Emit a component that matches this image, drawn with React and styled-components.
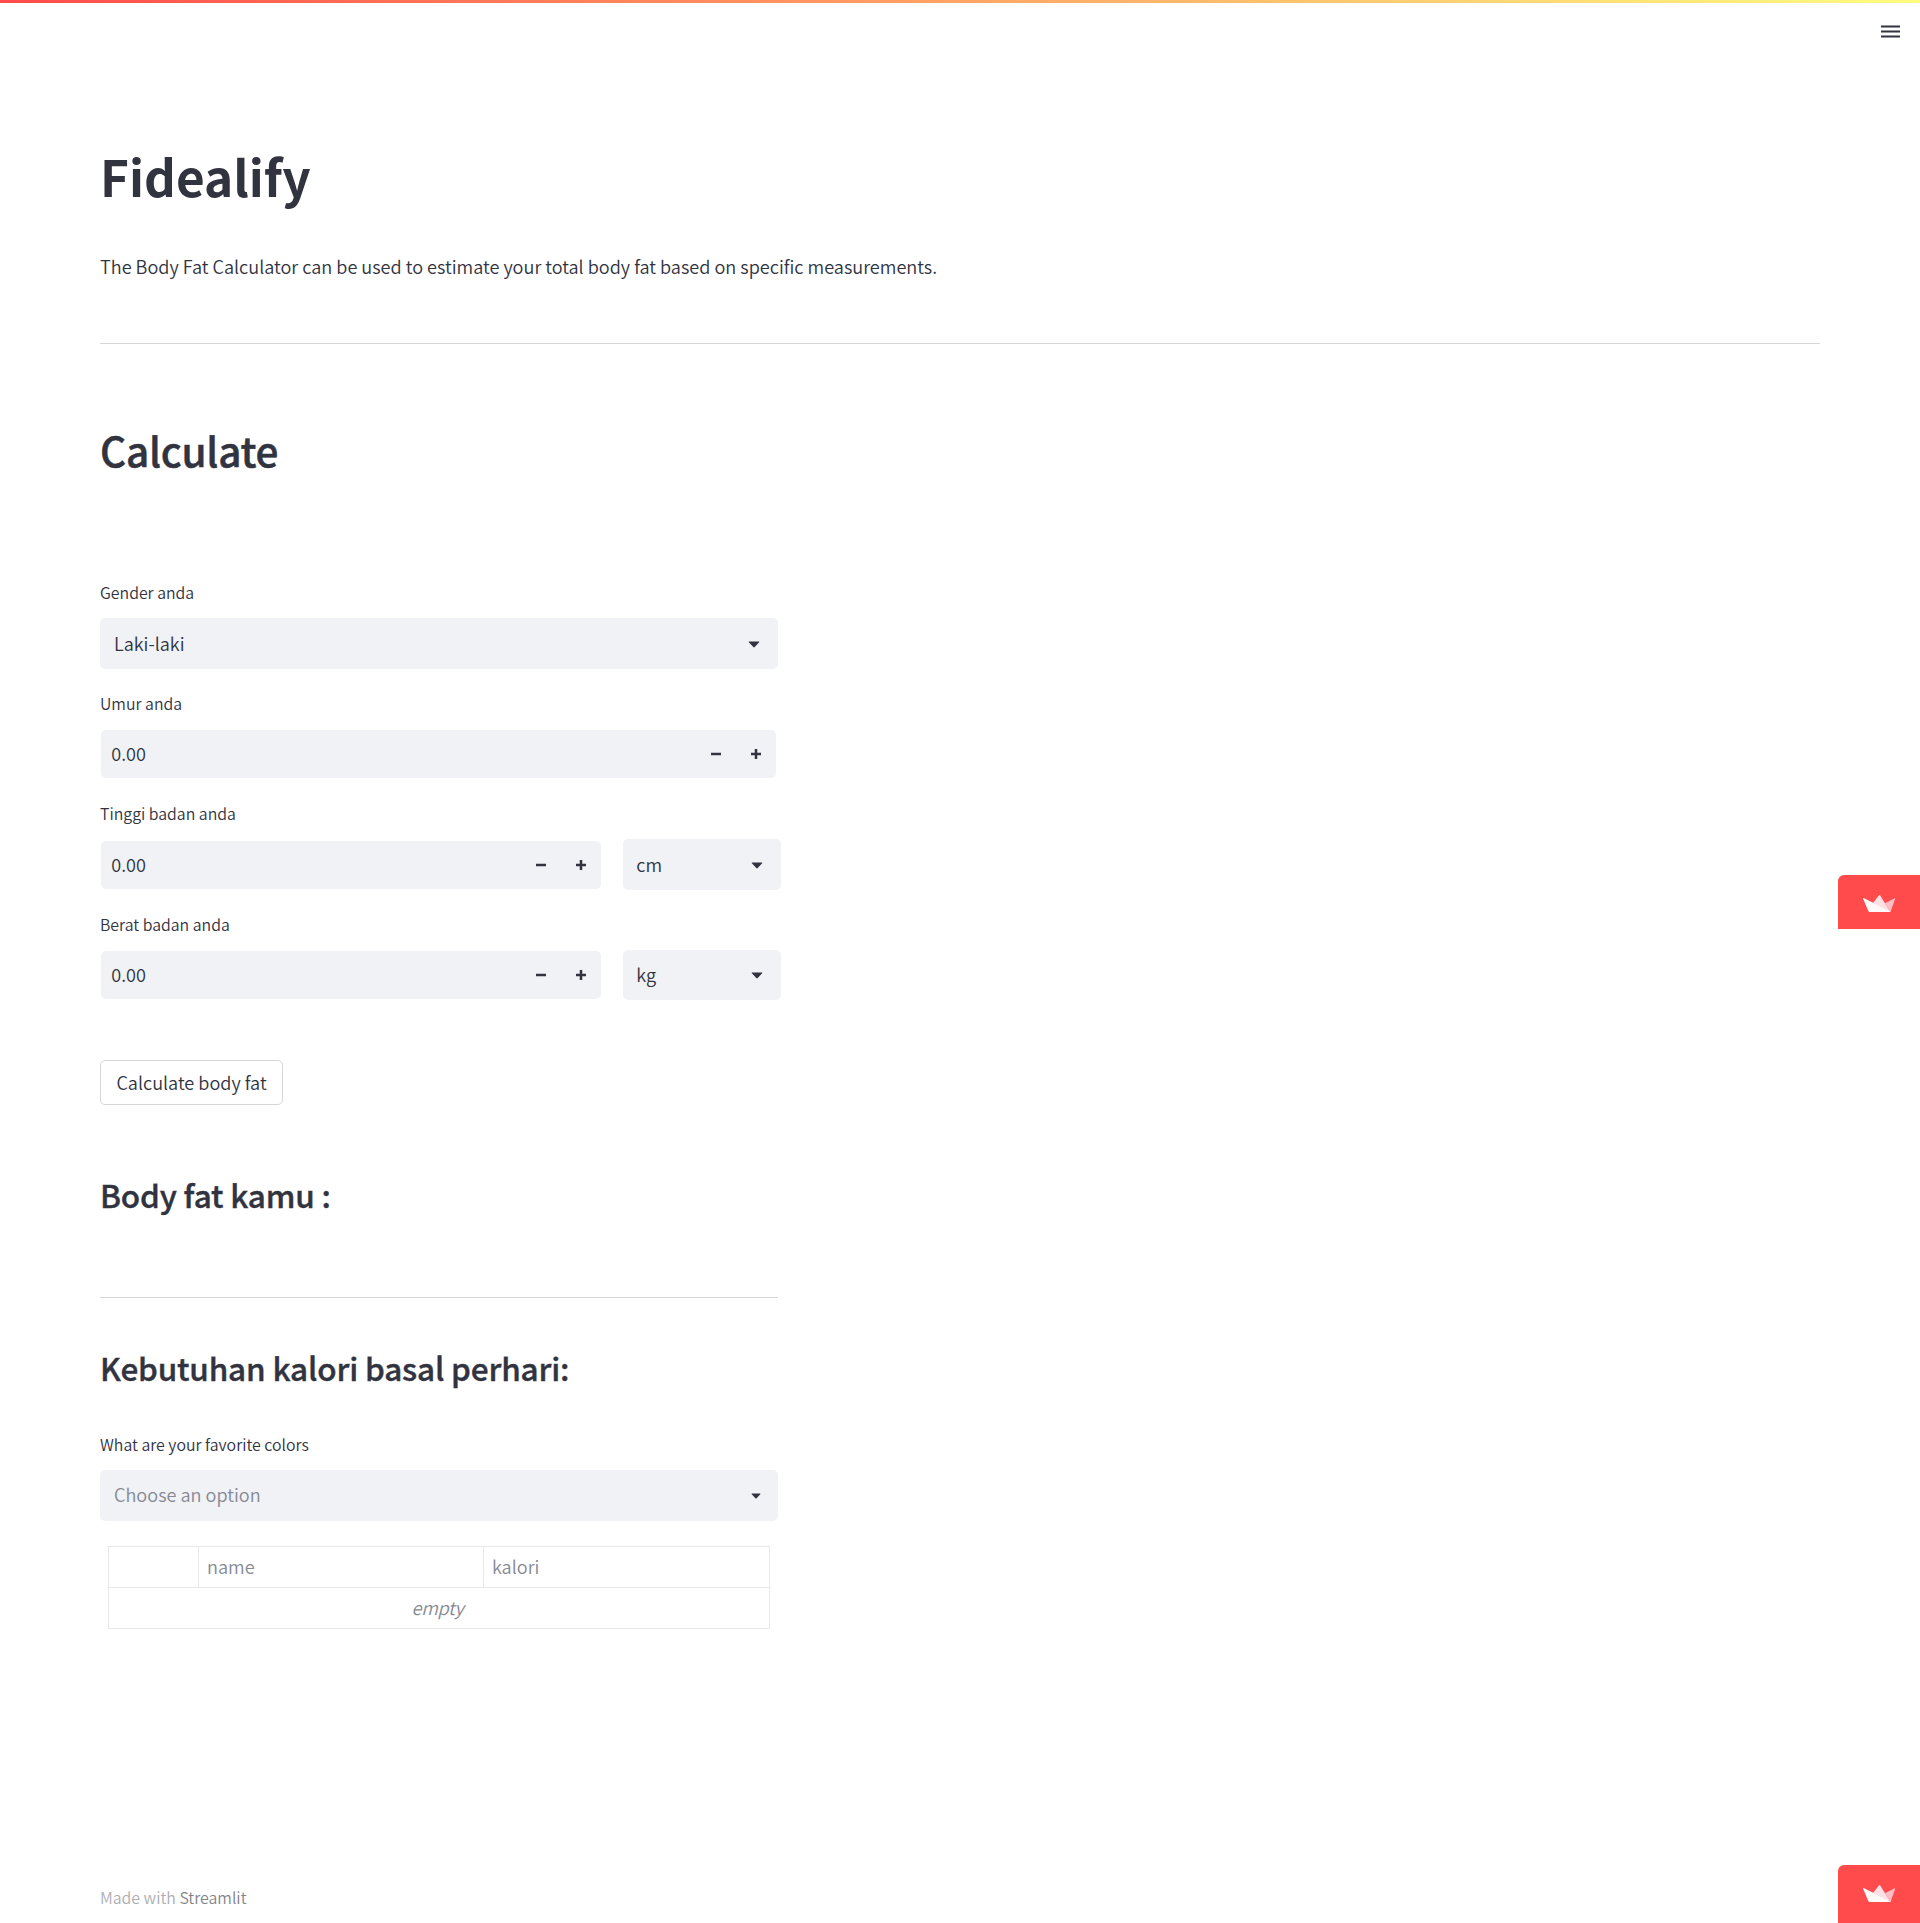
import React from "react";
import styled, { createGlobalStyle } from "styled-components";

const ink = "#31333f";
const field = "#f0f2f6";

const GlobalStyle = createGlobalStyle`
  *, *::before, *::after { box-sizing: border-box; }
  body {
    margin: 0;
    background: #fff;
    color: ${ink};
    font-family: "Noto Sans CJK SC", "Noto Sans", sans-serif;
    font-size: 18.1px;
    font-weight: 350;
    line-height: 32px;
  }
`;

const Page = styled.div`
  position: relative;
  height: 1923px;
  overflow: hidden;
  display: flex;
  flex-direction: column;
`;
const Decoration = styled.div`
  height: 3px;
  flex: none;
  background: linear-gradient(90deg, #ff4b4b, #fffd80);
`;
const Header = styled.header`
  height: 57px;
  flex: none;
  display: flex;
  justify-content: flex-end;
  align-items: center;
  padding-right: 20px;
`;
const Main = styled.main`
  flex: 1;
  padding: 83px 100px 0;
`;
const Title = styled.h1`
  margin: 0;
  font-size: 49.5px;
  line-height: 66px;
  font-weight: 700;
`;
const Intro = styled.p`
  margin: 41px 0 0;
`;
const Rule = styled.hr`
  margin: ${(p) => p.$above}px 0 0;
  border: 0;
  height: 1px;
  background: #d6d6d9;
`;
const SectionTitle = styled.h2`
  margin: 79px 0 0;
  font-size: 40.5px;
  line-height: 54px;
  font-weight: 500;
  letter-spacing: -0.25px;
  -webkit-text-stroke: 0.5px ${ink};
`;
const Form = styled.section`
  width: 678px;
  display: flex;
  flex-direction: column;
`;
const SubTitle = styled.h3`
  margin: ${(p) => p.$above}px 0 0;
  font-size: 31.5px;
  line-height: 42px;
  font-weight: 500;
  letter-spacing: -0.17px;
  -webkit-text-stroke: 0.4px ${ink};
`;
const Label = styled.label`
  display: block;
  margin-top: ${(p) => p.$above}px;
  font-size: 15.87px;
  line-height: 30px;
`;
const FieldRow = styled.div`
  display: grid;
  grid-template-columns: 502px 158px;
  column-gap: 21px;
  align-items: center;
  height: ${(p) => p.$height}px;
  margin-top: 10px;
`;
const SelectValue = styled.span`
  padding-bottom: 2px;
`;
const Select = styled.div`
  display: flex;
  align-items: center;
  justify-content: space-between;
  height: ${(p) => p.$height || 51}px;
  margin-top: ${(p) => p.$above || 0}px;
  padding: 0 ${(p) => p.$right || 18}px 0 ${(p) => p.$left || 14}px;
  border-radius: 5px;
  background: ${field};
  color: ${(p) => (p.$muted ? "#868993" : ink)};
  svg { display: block; color: ${ink}; margin-top: 1px; }
  ${SelectValue} { padding-bottom: ${(p) => (p.$muted ? 3 : 2)}px; }
`;
const NumberBox = styled.div`
  display: flex;
  align-items: center;
  height: 48px;
  margin: ${(p) => p.$above || 0}px ${(p) => p.$end || 1}px 0 1px;
  padding-left: 10.3px;
  border-radius: 5px;
  background: ${field};
`;
const NumberValue = styled.span`
  flex: 1;
  padding-bottom: 2px;
`;
const Step = styled.button`
  width: 40px;
  height: 48px;
  padding: 0;
  border: 0;
  background: transparent;
  color: ${ink};
  display: flex;
  align-items: center;
  justify-content: center;
  svg { display: block; }
`;
const ActionButton = styled.button`
  align-self: flex-start;
  width: 183px;
  height: 45px;
  margin-top: 60px;
  padding: 0;
  border: 1px solid #d6d6d9;
  border-radius: 5px;
  background: #fff;
  color: ${ink};
  font: inherit;
  line-height: 43px;
`;
const Table = styled.table`
  width: 662px;
  margin: 25px 0 0 8px;
  border-collapse: collapse;
  table-layout: fixed;
  color: #868993;
`;
const Cell = styled.td`
  width: ${(p) => (p.$width ? `${p.$width}px` : "auto")};
  height: 41px;
  padding: 0 ${(p) => (p.$center ? 11 : 8)}px 2px 8px;
  border: 1px solid #e8e8ea;
  line-height: 32px;
  text-align: ${(p) => (p.$center ? "center" : "left")};
  font-style: ${(p) => (p.$center ? "italic" : "normal")};
  letter-spacing: ${(p) => (p.$center ? "-0.25px" : "normal")};
`;
const Footer = styled.footer`
  height: 39px;
  flex: none;
  padding-left: 100px;
  font-size: 15.87px;
  line-height: 28px;
  color: #adaeb3;
`;
const FooterLink = styled.a`
  color: #83858c;
`;
const Badge = styled.a`
  position: absolute;
  right: 0;
  top: ${(p) => p.$top}px;
  width: 82px;
  height: ${(p) => p.$height}px;
  padding: 20px 0 0 25px;
  border-top-left-radius: 6px;
  background: #ff4b4b;
  svg { display: block; }
`;

const MenuIcon = () => (
  <svg width="19" height="13" viewBox="0 0 19 13">
    <path d="M0 1.5h19M0 6.5h19M0 11.5h19" stroke={ink} strokeWidth="2" />
  </svg>
);
const Caret = ({ small }) => (
  <svg width={small ? 10 : 12} height={small ? 6 : 7} viewBox="0 0 12 7">
    <path d="M1.2.4H10.8a.5.5 0 0 1 .35.9L6.7 6.1a1 1 0 0 1-1.4 0L.85 1.3a.5.5 0 0 1 .35-.9Z" fill="currentColor" />
  </svg>
);
const Minus = () => (
  <svg width="10" height="10" viewBox="0 0 10 10">
    <path d="M0 5h10" stroke="currentColor" strokeWidth="2.5" />
  </svg>
);
const Plus = () => (
  <svg width="10" height="10" viewBox="0 0 10 10">
    <path d="M0 5h10M5 0v10" stroke="currentColor" strokeWidth="2.5" />
  </svg>
);
const Crown = () => (
  <svg width="33" height="18" viewBox="0 0 33 18">
    <path d="M10 8 16 .2a.6.6 0 0 1 1 0L22 8.2 27.5 17Z" fill="#ffe0e6" />
    <path d="M22 8.2 31.6 3.2q.8-.2.5.7L27.5 17Z" fill="#ffbdc6" />
    <path d="M.6 2.9 27.5 16.5q-.3.6-1 .6H6.6q-.8 0-1.2-.8L0 3.6Q0 2.8.6 2.9Z" fill="#fffafa" />
  </svg>
);

const NumberInput = ({ above, end }) => (
  <NumberBox $above={above} $end={end}>
    <NumberValue>0.00</NumberValue>
    <Step aria-label="decrement"><Minus /></Step>
    <Step aria-label="increment"><Plus /></Step>
  </NumberBox>
);

export default function App() {
  return (
    <>
      <GlobalStyle />
      <Page>
        <Decoration />
        <Header><MenuIcon /></Header>
        <Main>
          <Title>Fidealify</Title>
          <Intro>
            The Body Fat Calculator can be used to estimate your total body fat based on specific measurements.
          </Intro>
          <Rule $above={61} />
          <SectionTitle>Calculate</SectionTitle>
          <Form>
            <Label $above={101}>Gender anda</Label>
            <Select $above={10}><SelectValue>Laki-laki</SelectValue><Caret /></Select>
            <Label $above={20}>Umur anda</Label>
            <NumberInput above={11} end={2} />
            <Label $above={21}>Tinggi badan anda</Label>
            <FieldRow $height={51}>
              <NumberInput />
              <Select $left={13.3}><SelectValue>cm</SelectValue><Caret /></Select>
            </FieldRow>
            <Label $above={20}>Berat badan anda</Label>
            <FieldRow $height={50}>
              <NumberInput />
              <Select $height={50} $left={13.3}><SelectValue>kg</SelectValue><Caret /></Select>
            </FieldRow>
            <ActionButton>Calculate body fat</ActionButton>
            <SubTitle $above={68}>Body fat kamu :</SubTitle>
            <Rule $above={82} />
            <SubTitle $above={48}>Kebutuhan kalori basal perhari:</SubTitle>
            <Label $above={42}>What are your favorite colors</Label>
            <Select $above={10} $muted $right={17}><SelectValue>Choose an option</SelectValue><Caret small /></Select>
            <Table>
              <tbody>
                <tr>
                  <Cell $width={90} />
                  <Cell $width={285}>name</Cell>
                  <Cell>kalori</Cell>
                </tr>
                <tr>
                  <Cell colSpan={3} $center>empty</Cell>
                </tr>
              </tbody>
            </Table>
          </Form>
        </Main>
        <Footer>Made with <FooterLink>Streamlit</FooterLink></Footer>
        <Badge $top={875} $height={54}><Crown /></Badge>
        <Badge $top={1865} $height={58}><Crown /></Badge>
      </Page>
    </>
  );
}
